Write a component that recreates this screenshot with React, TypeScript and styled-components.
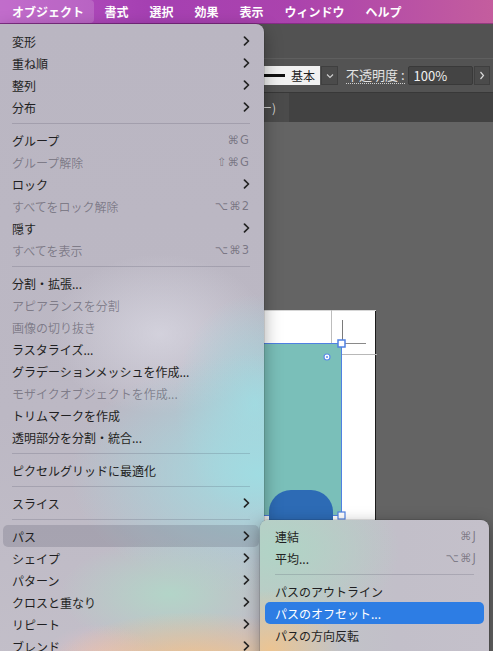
import styled, { createGlobalStyle } from "styled-components";

const GlobalStyle = createGlobalStyle`
  html, body {
    margin: 0;
    padding: 0;
  }
  body {
    font-family: "Noto Sans CJK JP", "Noto Sans", "DejaVu Sans", sans-serif;
    overflow: hidden;
  }
`;

type Item = {
  label?: string;
  shortcut?: string;
  submenu?: boolean;
  disabled?: boolean;
  active?: boolean;
  sep?: boolean;
};

const objectMenu: Item[] = [
  { label: "変形", submenu: true },
  { label: "重ね順", submenu: true },
  { label: "整列", submenu: true },
  { label: "分布", submenu: true },
  { sep: true },
  { label: "グループ", shortcut: "⌘G" },
  { label: "グループ解除", shortcut: "⇧⌘G", disabled: true },
  { label: "ロック", submenu: true },
  { label: "すべてをロック解除", shortcut: "⌥⌘2", disabled: true },
  { label: "隠す", submenu: true },
  { label: "すべてを表示", shortcut: "⌥⌘3", disabled: true },
  { sep: true },
  { label: "分割・拡張..." },
  { label: "アピアランスを分割", disabled: true },
  { label: "画像の切り抜き", disabled: true },
  { label: "ラスタライズ..." },
  { label: "グラデーションメッシュを作成..." },
  { label: "モザイクオブジェクトを作成...", disabled: true },
  { label: "トリムマークを作成" },
  { label: "透明部分を分割・統合..." },
  { sep: true },
  { label: "ピクセルグリッドに最適化" },
  { sep: true },
  { label: "スライス", submenu: true },
  { sep: true },
  { label: "パス", submenu: true, active: true },
  { label: "シェイプ", submenu: true },
  { label: "パターン", submenu: true },
  { label: "クロスと重なり", submenu: true },
  { label: "リピート", submenu: true },
  { label: "ブレンド", submenu: true },
];

const pathMenu: Item[] = [
  { label: "連結", shortcut: "⌘J" },
  { label: "平均...", shortcut: "⌥⌘J" },
  { sep: true },
  { label: "パスのアウトライン" },
  { label: "パスのオフセット...", active: true },
  { label: "パスの方向反転" },
];

const menuTitles = ["オブジェクト", "書式", "選択", "効果", "表示", "ウィンドウ", "ヘルプ"];

const Screen = styled.div`
  position: relative;
  width: 493px;
  height: 651px;
  overflow: hidden;
  display: flex;
  flex-direction: column;
  background: #646464;
`;

const MenuBar = styled.div`
  height: 24px;
  flex-shrink: 0;
  box-sizing: border-box;
  display: flex;
  align-items: stretch;
  background: linear-gradient(90deg, #b651c2 0%, #a540b2 30%, #ab43ad 60%, #c45d9e 100%);
  border-bottom: 1px solid rgba(90, 20, 90, 0.45);
`;

const MenuTitle = styled.div<{ $active?: boolean }>`
  display: flex;
  align-items: center;
  padding: ${(p) => (p.$active ? "0 10px 0 12px" : "0 10.5px")};
  font-size: 12px;
  font-weight: 700;
  color: #fff;
  background: ${(p) => (p.$active ? "rgba(255, 255, 255, 0.16)" : "transparent")};
  border-radius: ${(p) => (p.$active ? "0 4px 4px 0" : "0")};
`;

const ToolStrip = styled.div`
  height: 34px;
  flex-shrink: 0;
  background: #525252;
`;

const ControlBar = styled.div`
  height: 34px;
  flex-shrink: 0;
  box-sizing: border-box;
  border-top: 1px solid #5f5f5f;
  background: #535353;
  display: flex;
  align-items: center;
  padding-left: 200px;
`;

const StrokeBox = styled.div`
  width: 120px;
  height: 19px;
  background: #f1f1f1;
  display: flex;
  align-items: center;
  box-sizing: border-box;
  padding-left: 62px;
  gap: 6px;
`;

const StrokeLine = styled.div`
  width: 23px;
  height: 3px;
  background: #111;
`;

const StrokeName = styled.span`
  font-size: 12px;
  color: #222;
`;

const SmallButton = styled.div<{ $width: number }>`
  width: ${(p) => p.$width}px;
  height: 19px;
  box-sizing: border-box;
  margin-left: 1px;
  background: #4b4b4b;
  border: 1px solid #3f3f3f;
  display: flex;
  align-items: center;
  justify-content: center;
`;

const OpacityLabel = styled.span`
  margin-left: 8px;
  font-size: 13px;
  color: #e4e4e4;
  border-bottom: 1px dotted #cfcfcf;
  line-height: 16px;
`;

const OpacityInput = styled.div`
  margin-left: 3px;
  width: 65px;
  height: 19px;
  box-sizing: border-box;
  background: #444;
  border: 1px solid #393939;
  border-radius: 2px;
  color: #f0f0f0;
  font-size: 13px;
  padding-left: 5px;
  display: flex;
  align-items: center;
`;

const TabBar = styled.div`
  height: 30px;
  flex-shrink: 0;
  box-sizing: border-box;
  border-top: 1px solid #383838;
  background: #424242;
  display: flex;
`;

const DocTab = styled.div`
  width: 229px;
  margin-left: 60px;
  background: #4b4b4b;
  display: flex;
  align-items: center;
  justify-content: flex-end;
  padding-right: 13px;
  box-sizing: border-box;
  color: #d4d4d4;
  font-size: 12px;
  white-space: nowrap;
  overflow: hidden;
`;

const Canvas = styled.div`
  position: relative;
  flex: 1;
  background: #646464;
`;

const Artwork = styled.svg`
  position: absolute;
  left: 0;
  top: 0;
`;

const Dropdown = styled.div`
  position: absolute;
  left: 0;
  top: 24px;
  width: 264px;
  height: 650px;
  box-sizing: border-box;
  padding: 6px 5px 6px 3px;
  border-radius: 0 8px 8px 8px;
  box-shadow: 0 6px 18px rgba(0, 0, 0, 0.35), 0 0 0 0.5px rgba(0, 0, 0, 0.2);
  background:
    radial-gradient(ellipse 150px 60px at 195px 648px, rgba(246, 196, 132, 1), rgba(246, 196, 132, 0) 100%),
    radial-gradient(ellipse 60px 40px at 100px 640px, rgba(228, 190, 196, 0.9), rgba(228, 190, 196, 0) 100%),
    radial-gradient(ellipse 110px 55px at 170px 570px, rgba(178, 214, 200, 0.95), rgba(178, 214, 200, 0) 100%),
    radial-gradient(ellipse 190px 120px at 260px 450px, rgba(160, 220, 226, 1), rgba(160, 220, 226, 0) 100%),
    radial-gradient(ellipse 80px 110px at 255px 380px, rgba(160, 220, 226, 0.9), rgba(160, 220, 226, 0) 100%),
    radial-gradient(ellipse 110px 80px at 160px 310px, rgba(226, 226, 236, 0.6), rgba(226, 226, 236, 0) 100%),
    linear-gradient(180deg, #bab6c2 0%, #bcb8c4 60%, #c3bfc9 100%);
  z-index: 2;
`;

const Submenu = styled.div`
  position: absolute;
  left: 260px;
  top: 520px;
  width: 229px;
  height: 160px;
  box-sizing: border-box;
  padding: 5px 5px;
  border-radius: 8px;
  box-shadow: 0 4px 16px rgba(0, 0, 0, 0.35), 0 0 0 0.5px rgba(0, 0, 0, 0.2);
  background:
    radial-gradient(ellipse 70px 60px at 10px 130px, rgba(236, 196, 146, 1), rgba(236, 196, 146, 0) 100%),
    radial-gradient(ellipse 120px 80px at 20px 30px, rgba(176, 212, 198, 1), rgba(176, 212, 198, 0) 100%),
    linear-gradient(90deg, #c0c8c6 0%, #c2bfc9 60%, #c4c0ca 100%);
  z-index: 3;
`;

const Row = styled.div<{ $active?: boolean; $disabled?: boolean; $blue?: boolean; $pad: number }>`
  height: 22px;
  display: flex;
  align-items: center;
  justify-content: space-between;
  padding: 0 ${(p) => (p.$blue ? 7 : 9)}px 0 ${(p) => p.$pad}px;
  border-radius: 5px;
  font-size: 12px;
  white-space: nowrap;
  color: ${(p) => (p.$active && p.$blue ? "#fff" : p.$disabled ? "rgba(40, 38, 52, 0.42)" : "#1f1f22")};
  background: ${(p) =>
    p.$active ? (p.$blue ? "#2d7de4" : "rgba(70, 72, 90, 0.2)") : "transparent"};
`;

const Shortcut = styled.span`
  font-family: "DejaVu Sans", "Noto Sans", sans-serif;
  font-size: 11.5px;
  color: rgba(40, 38, 52, 0.45);
  letter-spacing: 1px;
`;

const Separator = styled.div<{ $inset: number }>`
  height: 11px;
  display: flex;
  align-items: center;
  padding: 0 ${(p) => p.$inset}px;
  &::after {
    content: "";
    flex: 1;
    height: 1px;
    background: rgba(40, 40, 60, 0.16);
  }
`;

const Chevron = () => (
  <svg width="7" height="10" viewBox="0 0 7 10">
    <path d="M1.5 1.2 L5.5 5 L1.5 8.8" fill="none" stroke="#222" strokeWidth="1.7" strokeLinecap="round" strokeLinejoin="round" />
  </svg>
);

const MenuList = ({ items, pad, blue }: { items: Item[]; pad: number; blue?: boolean }) => (
  <>
    {items.map((it, i) =>
      it.sep ? (
        <Separator key={i} $inset={blue ? 10 : 9} />
      ) : (
        <Row key={i} $pad={pad} $active={it.active} $disabled={it.disabled} $blue={blue}>
          <span>{it.label}</span>
          {it.shortcut && <Shortcut>{it.shortcut}</Shortcut>}
          {it.submenu && <Chevron />}
        </Row>
      )
    )}
  </>
);

export default function App() {
  return (
    <>
      <GlobalStyle />
      <Screen>
        <MenuBar>
          {menuTitles.map((t, i) => (
            <MenuTitle key={t} $active={i === 0}>
              {t}
            </MenuTitle>
          ))}
        </MenuBar>
        <ToolStrip />
        <ControlBar>
          <StrokeBox>
            <StrokeLine />
            <StrokeName>基本</StrokeName>
          </StrokeBox>
          <SmallButton $width={17}>
            <svg width="8" height="6" viewBox="0 0 8 6">
              <path d="M1 1.5 L4 4.5 L7 1.5" fill="none" stroke="#d0d0d0" strokeWidth="1.1" />
            </svg>
          </SmallButton>
          <OpacityLabel>不透明度 :</OpacityLabel>
          <OpacityInput>100%</OpacityInput>
          <SmallButton $width={16}>
            <svg width="6" height="9" viewBox="0 0 6 9">
              <path d="M1.5 1 L4.5 4.5 L1.5 8" fill="none" stroke="#d8d8d8" strokeWidth="1.2" />
            </svg>
          </SmallButton>
        </ControlBar>
        <TabBar>
          <DocTab>(CMYK/GPU プレビュー)</DocTab>
        </TabBar>
        <Canvas>
          <Artwork width="493" height="529" viewBox="0 0 493 529">
            <rect x="140" y="188" width="236" height="360" fill="#ffffff" />
            <line x1="375.5" y1="188" x2="375.5" y2="529" stroke="#1c1c1c" strokeWidth="1" />
            <line x1="140" y1="188.5" x2="376" y2="188.5" stroke="#d6d6d6" strokeWidth="1" />
            <rect x="150" y="221.5" width="191.5" height="172" fill="#7abfb9" stroke="#4f80e2" strokeWidth="1" />
            <rect x="269" y="368" width="64" height="62" rx="22" fill="#2d6bb5" />
            <line x1="331.5" y1="188" x2="331.5" y2="221" stroke="#bdbdbd" strokeWidth="1" />
            <line x1="342.5" y1="198" x2="342.5" y2="221" stroke="#7a7a7a" strokeWidth="1" />
            <line x1="341" y1="221.5" x2="366" y2="221.5" stroke="#8a8a8a" strokeWidth="1" />
            <line x1="342" y1="232.5" x2="377" y2="232.5" stroke="#b8b8b8" strokeWidth="1" />
            <rect x="338" y="218" width="7" height="7" fill="#fff" stroke="#4f80e2" strokeWidth="1.5" />
            <rect x="338" y="390" width="7" height="7" fill="#fff" stroke="#4f80e2" strokeWidth="1.2" />
            <circle cx="327" cy="235" r="3" fill="#fff" stroke="#5b8be8" strokeWidth="1.2" />
            <circle cx="327" cy="235" r="1" fill="#5b8be8" />
          </Artwork>
        </Canvas>
        <Dropdown>
          <MenuList items={objectMenu} pad={9} />
        </Dropdown>
        <Submenu>
          <MenuList items={pathMenu} pad={10} blue />
        </Submenu>
      </Screen>
    </>
  );
}
